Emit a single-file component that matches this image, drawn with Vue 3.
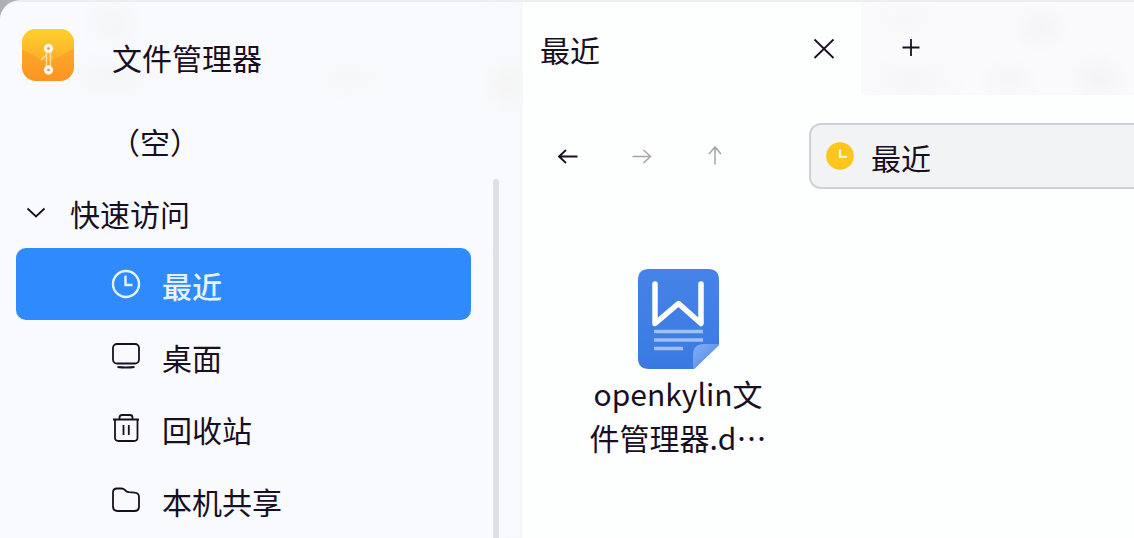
<script setup>
import { ref } from 'vue'

const places = [
  { name: '最近', icon: 'clock' },
  { name: '桌面', icon: 'desktop' },
  { name: '回收站', icon: 'trash' },
  { name: '本机共享', icon: 'folder' },
]
const current = ref('最近')
const path = ref('最近')
</script>

<template>
  <div class="backdrop" lang="zh-CN">
    <div class="window">
      <aside class="sidebar">
        <header class="brand">
          <svg class="brand-logo" viewBox="0 0 54 54" aria-hidden="true">
            <defs>
              <linearGradient id="logoTop" x1="0" y1="0" x2="0" y2="1">
                <stop offset="0" stop-color="#ffd02c" />
                <stop offset="1" stop-color="#fbae2a" />
              </linearGradient>
              <linearGradient id="logoBase" x1="0" y1="0" x2="0" y2="1">
                <stop offset="0" stop-color="#fbb42c" />
                <stop offset="1" stop-color="#fd9422" />
              </linearGradient>
            </defs>
            <rect x="1" y="1" width="52" height="52" rx="14" fill="url(#logoBase)" />
            <path d="M1 22V15A14 14 0 0 1 15 1H39A14 14 0 0 1 53 15V21L31 33Q27 35 23 33Z" fill="url(#logoTop)" />
            <path d="M1 22L23 33Q27 35 31 33L53 21" fill="none" stroke="#f5a324" stroke-width="1" opacity=".6" />
            <path d="M25.500 22V41M29.500 22V41M26 26L20 32" fill="none" stroke="#ffdc9c" stroke-width="1.500" />
            <circle cx="27.500" cy="20.500" r="4.700" fill="#fff5e2" />
            <circle cx="27.500" cy="42" r="4.700" fill="#fff5e2" />
            <circle cx="27.500" cy="20.500" r="1.300" fill="#b79a78" />
            <circle cx="27.500" cy="42" r="1.300" fill="#b79a78" />
          </svg>
          <h1 class="brand-name">文件管理器</h1>
        </header>

        <div class="tree">
          <nav class="tree-list" aria-label="位置">
            <p class="empty">（空）</p>
            <button class="group" type="button" aria-expanded="true">
              <svg class="chevron" viewBox="0 0 20 20" aria-hidden="true">
                <path d="M1.500 6.500L10 14.500L18.500 6.500" />
              </svg>
              <span class="label">快速访问</span>
            </button>
            <button
              v-for="place in places"
              :key="place.name"
              class="place"
              :class="{ active: place.name === current }"
              type="button"
              @click="current = place.name"
            >
              <svg class="place-icon" viewBox="0 0 30 30" aria-hidden="true">
                <template v-if="place.icon === 'clock'">
                  <circle cx="15" cy="15" r="13" />
                  <path d="M14.500 6.500V16H21.500" />
                </template>
                <template v-else-if="place.icon === 'desktop'">
                  <rect x="2" y="3" width="26" height="19.500" rx="4" />
                  <path d="M6.500 26Q15 27 23.500 26" />
                </template>
                <template v-else-if="place.icon === 'trash'">
                  <path d="M2 6.500H28M8.500 6V4.500Q8.500 2 11 2H19Q21.500 2 21.500 4.500V6M4 7V24.500Q4 28 7.500 28H23Q26.500 28 26.500 24.500V7M12.500 12V22M17.800 12V22" />
                </template>
                <template v-else>
                  <path d="M2 7.500Q2 3.500 6 3.500H10.500Q12.500 3.500 13.800 4.800L15 6Q16.200 7 18 7.200L23.500 7.600Q28 8 28 12V21.500Q28 26 23.500 26H6.500Q2 26 2 21.500Z" />
                </template>
              </svg>
              <span class="label">{{ place.name }}</span>
            </button>
          </nav>
          <div class="scroll-thumb"></div>
        </div>
      </aside>

      <main class="content">
        <div class="tabs">
          <div class="tab">
            <span class="tab-name">最近</span>
            <button class="icon-button" type="button" aria-label="关闭">
              <svg viewBox="0 0 24 24" aria-hidden="true">
                <path d="M2.500 2.500L21.500 21M21.500 2.500L2.500 21" />
              </svg>
            </button>
          </div>
          <button class="icon-button add" type="button" aria-label="新建">
            <svg viewBox="0 0 24 24" aria-hidden="true">
              <path d="M12 2V19M3.500 10.500H20.500" />
            </svg>
          </button>
        </div>

        <div class="toolbar">
          <div class="history">
            <button class="arrow" type="button" aria-label="后退">
              <svg viewBox="0 0 24 24" aria-hidden="true">
                <path d="M21.500 12.500H3M10 6L3 12.500L10 19" />
              </svg>
            </button>
            <button class="arrow" type="button" aria-label="前进" disabled>
              <svg viewBox="0 0 24 24" aria-hidden="true">
                <path d="M2.500 12.500H20.500M13.500 6L20.500 12.500L13.500 19" />
              </svg>
            </button>
            <button class="arrow" type="button" aria-label="向上" disabled>
              <svg viewBox="0 0 24 24" aria-hidden="true">
                <path d="M11 20.500V3M5 10L11 3L17 10" />
              </svg>
            </button>
          </div>
          <label class="path">
            <svg class="path-icon" viewBox="0 0 28 28" aria-hidden="true">
              <circle cx="14" cy="14" r="13.800" fill="#fdc61c" />
              <path d="M14 7.500V14.800H21" fill="none" stroke="#fff8dc" stroke-width="2.200" />
            </svg>
            <input v-model="path" class="path-input" type="text" aria-label="路径" />
          </label>
        </div>

        <div class="files">
          <button class="file" type="button">
            <svg class="file-icon" viewBox="0 0 82 102" aria-hidden="true">
              <defs>
                <linearGradient id="docFill" x1="0" y1="0" x2="0" y2="1">
                  <stop offset="0" stop-color="#4683e8" />
                  <stop offset="1" stop-color="#3a7ae0" />
                </linearGradient>
                <linearGradient id="foldFill" x1="0" y1="0" x2="1" y2="1">
                  <stop offset="0" stop-color="#84aff4" />
                  <stop offset="1" stop-color="#4a86e8" />
                </linearGradient>
              </defs>
              <path d="M12 1H71Q82 1 82 12V77L57 101H12Q1 101 1 90V12Q1 1 12 1Z" fill="url(#docFill)" />
              <path d="M56 101V87Q56 76 67 76H82V77L57 101Z" fill="url(#foldFill)" />
              <path d="M18 16V55.500L41.500 35.500L64 55.500V16" fill="none" stroke="#fff" stroke-width="5.500" stroke-linecap="round" stroke-linejoin="round" />
              <path d="M17 63.500H66M17 72H66M17 80.500H46" fill="none" stroke="#9fc1f7" stroke-width="3.500" />
            </svg>
            <span class="file-name">openkylin文件管理器.d…</span>
          </button>
        </div>
      </main>
    </div>
  </div>
</template>

<style>
html,
body {
  margin: 0;
}
</style>

<style scoped>
.backdrop {
  height: 100vh;
  overflow: hidden;
  background: #aeb0b3;
  color: #190f22;
  font-family: "Noto Sans CJK SC", "Noto Sans", sans-serif;
  font-size: 30px;
  line-height: 44px;
}
.window {
  box-sizing: border-box;
  display: flex;
  height: 100%;
  border-top: 2px solid #eceef0;
  border-radius: 20px 0 0 0;
  background: #fdfefe;
  overflow: hidden;
}
button {
  padding: 0;
  border: 0;
  background: none;
  color: inherit;
  font: inherit;
  text-align: left;
}
svg {
  display: block;
  flex: none;
}
.sidebar {
  display: flex;
  flex-direction: column;
  flex: 0 0 523px;
  min-width: 0;
  background:
    radial-gradient(ellipse 36px 30px at 112px 22px, #f5f6f8, transparent),
    radial-gradient(ellipse 60px 30px at 110px 76px, #f5f6f8, transparent),
    radial-gradient(ellipse 60px 26px at 350px 76px, #f6f7f9, transparent),
    radial-gradient(ellipse 28px 26px at 508px 82px, #f5f5f3, transparent),
    linear-gradient(90deg, #f9fafd 0, #f9fafd 480px, #f6f8fb 100%);
}
.brand {
  display: flex;
  align-items: center;
  gap: 37px;
  height: 106px;
  padding-left: 21px;
}
.brand-logo {
  width: 54px;
  height: 54px;
}
.brand-name {
  margin: 0;
  padding-top: 4px;
  font-size: 30px;
  font-weight: 400;
}
.tree {
  display: flex;
  flex: 1;
  min-height: 0;
}
.tree-list {
  flex: 1;
  min-width: 0;
  padding: 0 22px 0 16px;
  overflow: hidden;
}
.empty {
  margin: 0;
  padding: 11px 0 13px 94px;
}
.group,
.place {
  display: flex;
  align-items: center;
  width: 100%;
  height: 72px;
  border-radius: 10px;
}
.label {
  padding-top: 2px;
}
.group {
  gap: 24px;
  padding-left: 10px;
}
.chevron {
  width: 20px;
  height: 20px;
}
.chevron,
.place-icon,
.icon-button svg,
.arrow svg {
  fill: none;
  stroke: currentColor;
  stroke-width: 1.8;
}
.place {
  gap: 21px;
  padding-left: 95px;
}
.place-icon {
  width: 30px;
  height: 30px;
}
.place.active {
  background: #2f8afc;
  color: #e6f2ff;
  font-weight: 500;
}
.place.active .place-icon {
  stroke-width: 2.4;
}
.scroll-thumb {
  flex: none;
  width: 6px;
  margin: 71px 24px 0 0;
  border-radius: 3px 3px 0 0;
  background: #dde1e4;
}
.content {
  flex: 1;
  min-width: 0;
}
.tabs {
  display: flex;
  align-items: center;
  height: 93px;
  background:
    radial-gradient(ellipse 50px 24px at 380px 20px, #f7f7f9, transparent),
    radial-gradient(ellipse 30px 26px at 518px 26px, #f5f5f7, transparent),
    radial-gradient(ellipse 60px 26px at 390px 78px, #f6f6f8, transparent),
    radial-gradient(ellipse 34px 24px at 486px 78px, #f6f6f8, transparent),
    radial-gradient(ellipse 32px 28px at 576px 76px, #f4f4f6, transparent),
    #fafafc;
}
.tab {
  box-sizing: border-box;
  display: flex;
  align-items: center;
  justify-content: space-between;
  width: 338px;
  height: 100%;
  padding: 0 25px 0 17px;
  background: #fdfefe;
}
.icon-button svg,
.arrow svg {
  width: 24px;
  height: 24px;
}
.add {
  margin-left: 38px;
}
.toolbar {
  display: flex;
  align-items: center;
  gap: 69px;
  padding: 28px 0 0 21px;
}
.history {
  display: flex;
  gap: 26px;
}
.arrow {
  display: grid;
  place-items: center;
  width: 48px;
  height: 48px;
}
.arrow:disabled {
  color: #a7a2ac;
}
.arrow:disabled svg {
  stroke-width: 1.5;
}
.path {
  display: flex;
  align-items: center;
  gap: 17px;
  flex: 1;
  min-width: 0;
  box-sizing: border-box;
  height: 66px;
  padding-left: 15px;
  border: 2px solid #cfd3d7;
  border-right: 0;
  border-radius: 12px 0 0 12px;
  background: #f2f3f5;
}
.path-icon {
  width: 28px;
  height: 28px;
}
.path-input {
  flex: 1;
  min-width: 0;
  height: 44px;
  padding: 2px 0 0;
  border: 0;
  outline: 0;
  background: none;
  color: inherit;
  font: inherit;
}
.files {
  display: flex;
  flex-wrap: wrap;
  padding: 79px 0 0 65px;
}
.file {
  display: flex;
  flex-direction: column;
  align-items: center;
  gap: 1px;
  width: 180px;
}
.file-icon {
  width: 82px;
  height: 102px;
}
.file-name {
  text-align: center;
  word-break: break-all;
}
</style>
